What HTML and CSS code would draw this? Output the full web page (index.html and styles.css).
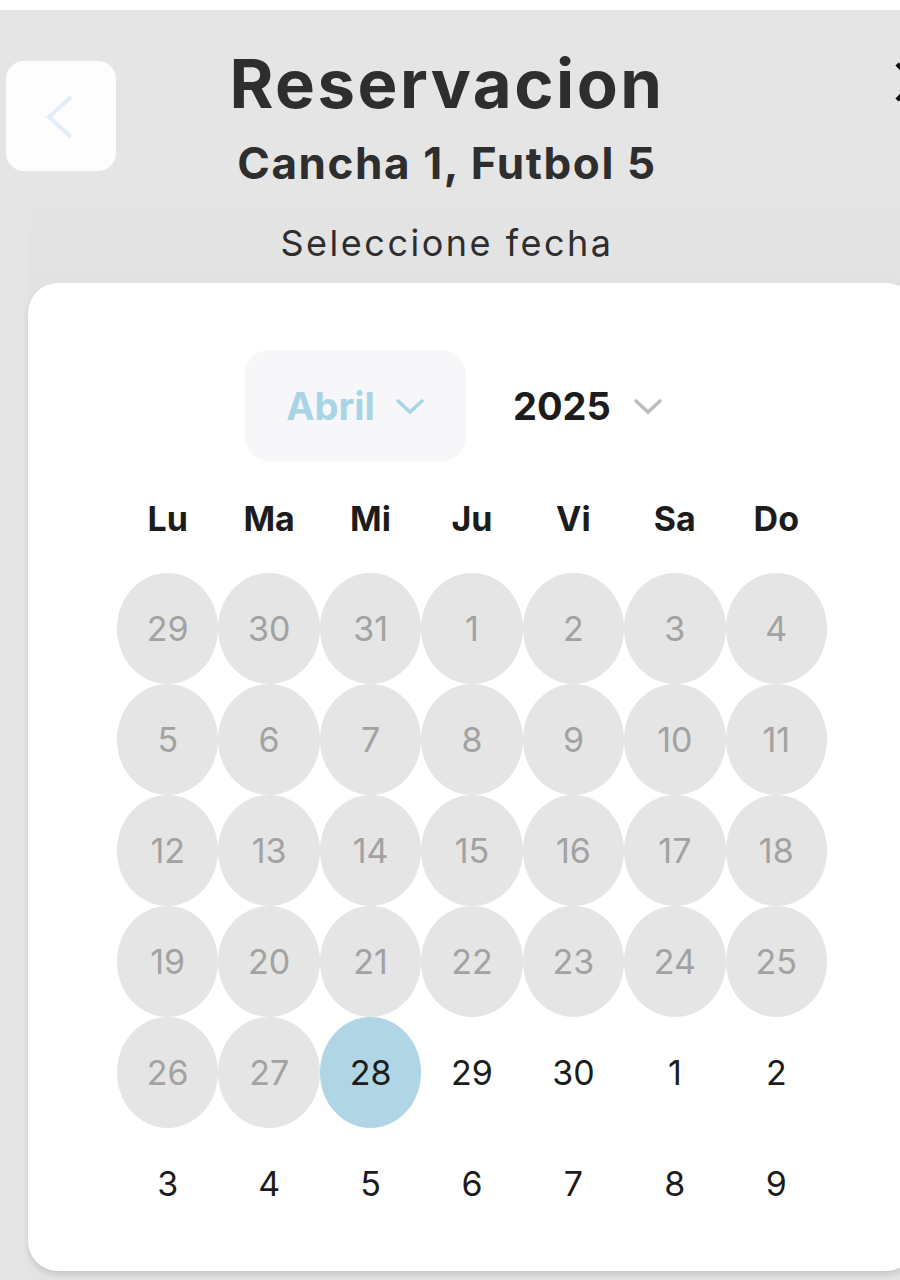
FILE: index.html
```html
<!DOCTYPE html>
<html lang="es">
<head>
<meta charset="utf-8">
<title>Reservacion</title>
<link rel="stylesheet" href="styles.css">
</head>
<body>
<div class="screen">
  <div class="backdrop"></div>
  <header class="header">
    <button class="back-btn" aria-label="Volver">
      <svg width="40" height="50" viewBox="0 0 40 50"><path d="M30 6 L8 26 L30 46" fill="none" stroke="#e2edfb" stroke-width="4"/></svg>
    </button>
    <div class="titles">
      <h1 class="title">Reservacion</h1>
      <h2 class="subtitle">Cancha 1, Futbol 5</h2>
      <p class="hint">Seleccione fecha</p>
    </div>
    <div class="spacer"></div>
  </header>
  <svg class="close" width="40" height="40" viewBox="0 0 40 40"><path d="M2 2 L38 38 M38 2 L2 38" stroke="#111" stroke-width="4.5"/></svg>

  <section class="card">
    <div class="picker-row">
      <div class="month-btn">
        <span class="month">Abril</span>
        <svg width="30" height="18" viewBox="0 0 30 18"><path d="M2 3 L15 15 L28 3" fill="none" stroke="#a9d4e6" stroke-width="3.5"/></svg>
      </div>
      <div class="year-btn">
        <span class="year">2025</span>
        <svg width="30" height="18" viewBox="0 0 30 18"><path d="M2 3 L15 15 L28 3" fill="none" stroke="#bdbdbd" stroke-width="3.5"/></svg>
      </div>
    </div>
    <div class="weekdays">
      <span>Lu</span><span>Ma</span><span>Mi</span><span>Ju</span><span>Vi</span><span>Sa</span><span>Do</span>
    </div>
    <div class="days">
      <span class="day off">29</span><span class="day off">30</span><span class="day off">31</span><span class="day off">1</span><span class="day off">2</span><span class="day off">3</span><span class="day off">4</span>
      <span class="day off">5</span><span class="day off">6</span><span class="day off">7</span><span class="day off">8</span><span class="day off">9</span><span class="day off">10</span><span class="day off">11</span>
      <span class="day off">12</span><span class="day off">13</span><span class="day off">14</span><span class="day off">15</span><span class="day off">16</span><span class="day off">17</span><span class="day off">18</span>
      <span class="day off">19</span><span class="day off">20</span><span class="day off">21</span><span class="day off">22</span><span class="day off">23</span><span class="day off">24</span><span class="day off">25</span>
      <span class="day off">26</span><span class="day off">27</span><span class="day sel">28</span><span class="day">29</span><span class="day">30</span><span class="day">1</span><span class="day">2</span>
      <span class="day">3</span><span class="day">4</span><span class="day">5</span><span class="day">6</span><span class="day">7</span><span class="day">8</span><span class="day">9</span>
    </div>
  </section>
</div>
</body>
</html>
```

FILE: styles.css
```css
* { box-sizing: border-box; }
html, body { margin: 0; padding: 0; }
body {
  background: #ffffff;
  width: 900px;
  height: 1280px;
  overflow: hidden;
  font-family: Inter, "Liberation Sans", sans-serif;
}
.screen {
  margin-top: 10px;
  height: 1270px;
  background: #e5e5e5;
  position: relative;
  overflow: hidden;
}
.backdrop {
  position: absolute;
  left: 28px;
  top: 170px;
  width: 900px;
  height: 1120px;
  background: linear-gradient(180deg, #e5e5e5 0%, #e2e2e3 10%, #e4e4e4 100%);
}
.header {
  position: relative;
  display: grid;
  grid-template-columns: 1fr auto 1fr;
  padding: 51px 0 0 6px;
}
.back-btn {
  width: 110px;
  height: 110px;
  border: none;
  border-radius: 18px;
  background: #fdfdfd;
  display: flex;
  align-items: center;
  justify-content: center;
  padding: 0;
  justify-self: start;
}
.titles {
  display: flex;
  flex-direction: column;
  align-items: center;
  color: #2e2e2e;
  margin: -11px 12px 0 0;
}
.title {
  margin: 0;
  font-size: 67px;
  font-weight: 700;
  line-height: 68px;
  letter-spacing: 2.5px;
}
.subtitle {
  margin: 17px 0 0;
  font-size: 44px;
  font-weight: 700;
  line-height: 56px;
  letter-spacing: 1.6px;
}
.hint {
  margin: 27px 0 0;
  font-size: 36px;
  font-weight: 400;
  line-height: 50px;
  letter-spacing: 2.5px;
}
.close {
  position: absolute;
  left: 895px;
  top: 52px;
}
.card {
  position: relative;
  margin: 15px 0 0 28px;
  width: 888px;
  height: 988px;
  background: #ffffff;
  border-radius: 30px;
  padding: 67px 89px 31px;
  box-shadow: 0 4px 6px rgba(0,0,0,0.12);
}
.picker-row {
  display: flex;
  align-items: center;
  gap: 47px;
  padding-left: 128px;
  height: 111px;
}
.month-btn {
  width: 221px;
  height: 111px;
  border-radius: 24px;
  background: #f7f7f9;
  display: flex;
  align-items: center;
  justify-content: center;
  gap: 20px;
}
.month {
  font-size: 38px;
  font-weight: 700;
  color: #a9d4e6;
}
.year-btn {
  display: flex;
  align-items: center;
  gap: 22px;
}
.year {
  font-size: 38px;
  font-weight: 700;
  color: #1c1c1c;
}
.weekdays {
  display: grid;
  grid-template-columns: repeat(7, 1fr);
  margin-top: 2px;
  height: 110px;
  align-items: center;
}
.weekdays span {
  text-align: center;
  font-size: 34px;
  font-weight: 700;
  color: #1c1c1c;
}
.days {
  display: grid;
  grid-template-columns: repeat(7, 1fr);
  grid-auto-rows: 111px;
}
.day {
  display: flex;
  align-items: center;
  justify-content: center;
  border-radius: 50%;
  font-size: 34px;
  color: #1c1c1c;
}
.day.off {
  background: #e5e5e5;
  color: #a2a2a2;
}
.day.sel {
  background: #b0d6e6;
  color: #1c1c1c;
}
```
